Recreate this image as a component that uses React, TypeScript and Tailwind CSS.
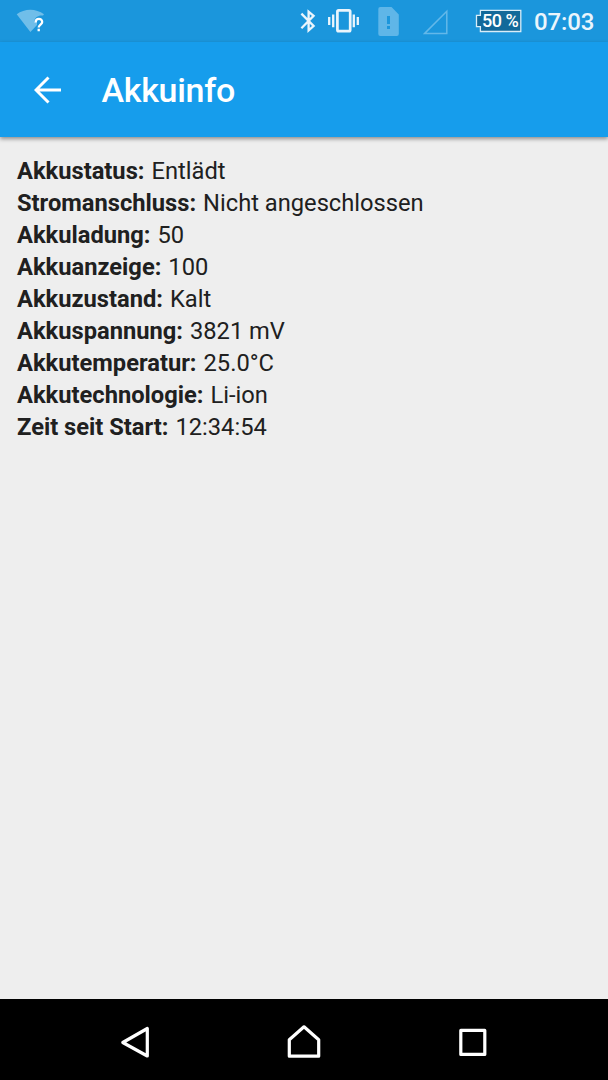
const rows: [string, string][] = [
  ["Akkustatus:", "Entlädt"],
  ["Stromanschluss:", "Nicht angeschlossen"],
  ["Akkuladung:", "50"],
  ["Akkuanzeige:", "100"],
  ["Akkuzustand:", "Kalt"],
  ["Akkuspannung:", "3821 mV"],
  ["Akkutemperatur:", "25.0°C"],
  ["Akkutechnologie:", "Li-ion"],
  ["Zeit seit Start:", "12:34:54"],
];

function StatusBar() {
  return (
    <div className="flex h-[42px] shrink-0 items-center bg-[#1b96dc] pr-[14px] pl-4 text-[#eaf5fc]">
      <svg className="h-[42px] w-[30px]" viewBox="0 0 30 42" fill="none">
        <path d="M.7 14.3C8.5 8.2 20 8.2 28 14.3L27 15.6C23 14.8 18.5 17 18.3 21.8H21V25L14.4 32Z" fill="#70bee9" />
        <path d="M19.6 22.4C19.6 17.7 26.2 17.8 26.2 22C26.2 24.6 22.7 24.7 22.7 27.6M22.7 28.8V31.2" stroke="#fff" strokeWidth="2.3" />
      </svg>
      <svg className="ml-auto h-[42px] w-4" viewBox="0 0 16 42" fill="none" stroke="currentColor" strokeWidth="2.3">
        <path d="M1.4 13.6L13.6 26L8.6 30.4V11.6L13.6 15.8L1.4 28.2" />
      </svg>
      <svg className="ml-3 h-[42px] w-[31px]" viewBox="0 0 31 42" fill="none" stroke="currentColor">
        <rect x="9.4" y="10.3" width="12.8" height="20.9" rx="1.2" strokeWidth="2.7" />
        <path d="M1.2 17V25M5.2 14.5V27.2M25.8 14.5V27.2M29.8 17V25" strokeWidth="2.3" />
      </svg>
      <svg className="ml-[19px] h-[42px] w-[21px]" viewBox="0 0 21 42">
        <path d="M2.3 7H13.5L20.8 14.5V34Q20.8 36 18.8 36H2.3Q.3 36 .3 34V9Q.3 7 2.3 7Z" fill="#5fb6e8" />
        <path d="M10.5 16V24M10.5 26V29" stroke="#1b96dc" strokeWidth="3" />
      </svg>
      <svg className="ml-6 h-[42px] w-[25px]" viewBox="0 0 25 42" fill="none">
        <path d="M1.7 33.4L23.8 11.3V33.4Z" stroke="#63b8e9" strokeWidth="1.5" />
      </svg>
      <div className="relative ml-[27px] flex h-[42px] w-[47px] items-center">
        <svg className="absolute inset-0 h-[42px] w-[47px]" viewBox="0 0 47 42">
          <path d="M5.4 10.3H45.8V31.5H5.4V26.7H1.5V15.4H5.4Z" fill="#12699a" stroke="#d9edf8" strokeWidth="1.3" />
        </svg>
        <span className="relative ml-[7px] w-[36px] text-[18px] leading-none font-medium tracking-[-0.5px] whitespace-nowrap text-white">50 %</span>
      </div>
      <span className="mt-[2px] ml-[12px] w-[60px] text-[24px] leading-[42px] font-medium tracking-[-0.1px] whitespace-nowrap">07:03</span>
    </div>
  );
}

export default function App() {
  return (
    <div className="flex h-[1080px] w-[608px] flex-col overflow-hidden bg-[#eeeeee] font-['Roboto',sans-serif] text-[#202020]">
      <StatusBar />
      <header className="z-10 flex h-[95px] shrink-0 items-center bg-[#169dec] pl-[34px] text-white shadow-[0_2px_4px_rgba(0,0,0,0.4)]">
        <svg className="h-7 w-7" viewBox="0 0 28 28" fill="none" stroke="currentColor" strokeWidth="3">
          <path d="M27 14H3M14.5 1.5L2 14L14.5 26.5" />
        </svg>
        <h1 className="mt-px ml-[39.5px] text-[34px] leading-[40px] font-medium tracking-[-0.3px]">Akkuinfo</h1>
      </header>
      <main className="flex-1 pt-[18px] pl-[17px] text-[23.7px]">
        {rows.map(([label, value]) => (
          <p key={label} className="h-[32.05px] leading-[32px] whitespace-nowrap">
            <b className="font-bold">{label}</b> <span className="ml-[1.1px]">{value}</span>
          </p>
        ))}
      </main>
      <nav className="flex h-[81px] shrink-0 items-center justify-between bg-black pr-[119px] pl-[120px]">
        <svg className="h-9 w-[31px]" viewBox="0 0 31 36" fill="none" stroke="#fff" strokeWidth="3.2" strokeLinejoin="round">
          <path d="M2.8 20.5L27.3 6.5V34Z" />
        </svg>
        <svg className="h-9 w-9" viewBox="0 0 36 36" fill="none" stroke="#fff" strokeWidth="3.2" strokeLinejoin="round">
          <path d="M17 4.8L31.7 17.7V34.2H2.3V17.7Z" />
        </svg>
        <svg className="h-9 w-[31px]" viewBox="0 0 31 36" fill="none" stroke="#fff" strokeWidth="3.2" strokeLinejoin="round">
          <rect x="2.8" y="8.4" width="24" height="24" />
        </svg>
      </nav>
    </div>
  );
}
